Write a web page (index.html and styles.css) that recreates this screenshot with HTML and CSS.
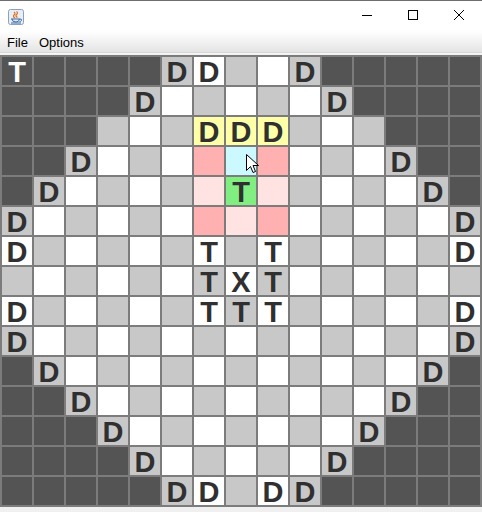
FILE: index.html
```html
<!DOCTYPE html>
<html>
<head>
<meta charset="utf-8">
<link rel="stylesheet" href="styles.css">
</head>
<body>
<div class="window">
  <div class="titlebar">
    <svg class="appicon" width="16" height="16" viewBox="0 0 16 16">
      <rect x="0.5" y="0.5" width="15" height="15" rx="2" fill="#e8eef6" stroke="#8aa0bc"/>
      <path d="M6 3 q2 1.5 0 3 q-1.5 1.5 1 3" fill="none" stroke="#e07020" stroke-width="1.2"/>
      <path d="M8.5 2.5 q2 1.5 0 3 q-1.5 1.5 1 3" fill="none" stroke="#e07020" stroke-width="1.2"/>
      <path d="M3 10 h9 q2 0 1.5 1.5 q-0.5 1 -2 1 M4 10 q0 3 4 3 q3 0 3.5 -3" fill="none" stroke="#3a6aa8" stroke-width="1"/>
      <path d="M3 14 h10" stroke="#3a6aa8" stroke-width="1"/>
    </svg>
    <div class="spacer"></div>
    <div class="ctrl">
      <svg width="10" height="10" viewBox="0 0 10 10"><path d="M0 5.5 H10" stroke="#000" stroke-width="1"/></svg>
    </div>
    <div class="ctrl">
      <svg width="10" height="10" viewBox="0 0 10 10"><rect x="0.5" y="0.5" width="9" height="9" fill="none" stroke="#000" stroke-width="1"/></svg>
    </div>
    <div class="ctrl">
      <svg width="10" height="10" viewBox="0 0 10 10"><path d="M0 0 L10 10 M10 0 L0 10" stroke="#000" stroke-width="1"/></svg>
    </div>
  </div>
  <div class="menubar">
    <span class="menu">File</span>
    <span class="menu">Options</span>
  </div>
  <div class="sep"></div>
  <div class="board">
    <!-- row 0 -->
    <div class="cell k wt">T</div><div class="cell k"></div><div class="cell k"></div><div class="cell k"></div><div class="cell k"></div>
    <div class="cell g">D</div><div class="cell w">D</div><div class="cell g"></div><div class="cell w"></div><div class="cell g">D</div>
    <div class="cell k"></div><div class="cell k"></div><div class="cell k"></div><div class="cell k"></div><div class="cell k"></div>
    <!-- row 1 -->
    <div class="cell k"></div><div class="cell k"></div><div class="cell k"></div><div class="cell k"></div>
    <div class="cell g">D</div><div class="cell w"></div><div class="cell g"></div><div class="cell w"></div><div class="cell g"></div><div class="cell w"></div><div class="cell g">D</div>
    <div class="cell k"></div><div class="cell k"></div><div class="cell k"></div><div class="cell k"></div>
    <!-- row 2 -->
    <div class="cell k"></div><div class="cell k"></div><div class="cell k"></div>
    <div class="cell g"></div><div class="cell w"></div><div class="cell g"></div><div class="cell y">D</div><div class="cell y">D</div><div class="cell y">D</div><div class="cell g"></div><div class="cell w"></div><div class="cell g"></div>
    <div class="cell k"></div><div class="cell k"></div><div class="cell k"></div>
    <!-- row 3 -->
    <div class="cell k"></div><div class="cell k"></div>
    <div class="cell g">D</div><div class="cell w"></div><div class="cell g"></div><div class="cell w"></div><div class="cell p"></div><div class="cell c"></div><div class="cell p"></div><div class="cell w"></div><div class="cell g"></div><div class="cell w"></div><div class="cell g">D</div>
    <div class="cell k"></div><div class="cell k"></div>
    <!-- row 4 -->
    <div class="cell k"></div>
    <div class="cell g">D</div><div class="cell w"></div><div class="cell g"></div><div class="cell w"></div><div class="cell g"></div><div class="cell l"></div><div class="cell n">T</div><div class="cell l"></div><div class="cell g"></div><div class="cell w"></div><div class="cell g"></div><div class="cell w"></div><div class="cell g">D</div>
    <div class="cell k"></div>
    <!-- row 5 -->
    <div class="cell g">D</div><div class="cell w"></div><div class="cell g"></div><div class="cell w"></div><div class="cell g"></div><div class="cell w"></div><div class="cell p"></div><div class="cell l"></div><div class="cell p"></div><div class="cell w"></div><div class="cell g"></div><div class="cell w"></div><div class="cell g"></div><div class="cell w"></div><div class="cell g">D</div>
    <!-- row 6 -->
    <div class="cell w">D</div><div class="cell g"></div><div class="cell w"></div><div class="cell g"></div><div class="cell w"></div><div class="cell g"></div><div class="cell w">T</div><div class="cell g"></div><div class="cell w">T</div><div class="cell g"></div><div class="cell w"></div><div class="cell g"></div><div class="cell w"></div><div class="cell g"></div><div class="cell w">D</div>
    <!-- row 7 -->
    <div class="cell g"></div><div class="cell w"></div><div class="cell g"></div><div class="cell w"></div><div class="cell g"></div><div class="cell w"></div><div class="cell g">T</div><div class="cell w">X</div><div class="cell g">T</div><div class="cell w"></div><div class="cell g"></div><div class="cell w"></div><div class="cell g"></div><div class="cell w"></div><div class="cell g"></div>
    <!-- row 8 -->
    <div class="cell w">D</div><div class="cell g"></div><div class="cell w"></div><div class="cell g"></div><div class="cell w"></div><div class="cell g"></div><div class="cell w">T</div><div class="cell g">T</div><div class="cell w">T</div><div class="cell g"></div><div class="cell w"></div><div class="cell g"></div><div class="cell w"></div><div class="cell g"></div><div class="cell w">D</div>
    <!-- row 9 -->
    <div class="cell g">D</div><div class="cell w"></div><div class="cell g"></div><div class="cell w"></div><div class="cell g"></div><div class="cell w"></div><div class="cell g"></div><div class="cell w"></div><div class="cell g"></div><div class="cell w"></div><div class="cell g"></div><div class="cell w"></div><div class="cell g"></div><div class="cell w"></div><div class="cell g">D</div>
    <!-- row 10 -->
    <div class="cell k"></div>
    <div class="cell g">D</div><div class="cell w"></div><div class="cell g"></div><div class="cell w"></div><div class="cell g"></div><div class="cell w"></div><div class="cell g"></div><div class="cell w"></div><div class="cell g"></div><div class="cell w"></div><div class="cell g"></div><div class="cell w"></div><div class="cell g">D</div>
    <div class="cell k"></div>
    <!-- row 11 -->
    <div class="cell k"></div><div class="cell k"></div>
    <div class="cell g">D</div><div class="cell w"></div><div class="cell g"></div><div class="cell w"></div><div class="cell g"></div><div class="cell w"></div><div class="cell g"></div><div class="cell w"></div><div class="cell g"></div><div class="cell w"></div><div class="cell g">D</div>
    <div class="cell k"></div><div class="cell k"></div>
    <!-- row 12 -->
    <div class="cell k"></div><div class="cell k"></div><div class="cell k"></div>
    <div class="cell g">D</div><div class="cell w"></div><div class="cell g"></div><div class="cell w"></div><div class="cell g"></div><div class="cell w"></div><div class="cell g"></div><div class="cell w"></div><div class="cell g">D</div>
    <div class="cell k"></div><div class="cell k"></div><div class="cell k"></div>
    <!-- row 13 -->
    <div class="cell k"></div><div class="cell k"></div><div class="cell k"></div><div class="cell k"></div>
    <div class="cell g">D</div><div class="cell w"></div><div class="cell g"></div><div class="cell w"></div><div class="cell g"></div><div class="cell w"></div><div class="cell g">D</div>
    <div class="cell k"></div><div class="cell k"></div><div class="cell k"></div><div class="cell k"></div>
    <!-- row 14 -->
    <div class="cell k"></div><div class="cell k"></div><div class="cell k"></div><div class="cell k"></div><div class="cell k"></div>
    <div class="cell g">D</div><div class="cell w">D</div><div class="cell g"></div><div class="cell w">D</div><div class="cell g">D</div>
    <div class="cell k"></div><div class="cell k"></div><div class="cell k"></div><div class="cell k"></div><div class="cell k"></div>
    <svg class="cursor" width="13" height="20" viewBox="0 0 13 20">
      <path d="M0.5 0.5 V16.5 L4.5 12.5 L7 18.5 L9.5 17.5 L7 11.5 H12.5 Z" fill="#fff" stroke="#000" stroke-width="1"/>
    </svg>
  </div>
</div>
</body>
</html>
```
FILE: styles.css
```css
html, body {
  margin: 0;
  padding: 0;
  background: #f0f0f0;
}
.window {
  width: 482px;
  height: 512px;
  overflow: hidden;
  background: #f0f0f0;
}
.titlebar {
  height: 30px;
  background: #ffffff;
  border-top: 1px solid #6e6e6e;
  display: flex;
  align-items: stretch;
  box-sizing: content-box;
}
.appicon {
  margin: 8px 0 0 8px;
  flex: none;
}
.spacer {
  flex: 1;
}
.ctrl {
  width: 46px;
  display: flex;
  align-items: flex-start;
  justify-content: center;
  padding-top: 9px;
  box-sizing: border-box;
}
.menubar {
  height: 21px;
  background: linear-gradient(#ffffff, #e4e4e4);
  display: flex;
  align-items: center;
  padding-left: 7px;
  gap: 11px;
  font-family: "Liberation Sans", Arial, sans-serif;
  font-size: 13px;
  color: #000;
}
.menu {
  line-height: 21px;
  padding-top: 1px;
}
.sep {
  height: 1px;
  border-top: 1px solid #d6d6d6;
  background: #f8f8f8;
  margin-bottom: 1px;
}
.board {
  position: relative;
  display: grid;
  grid-template-columns: repeat(15, 30px);
  grid-template-rows: repeat(15, 28px);
  gap: 2px;
  padding: 2px;
  background: #7c7c7c;
  width: max-content;
}
.cell {
  display: flex;
  align-items: center;
  justify-content: center;
  font-family: "Liberation Sans", Arial, sans-serif;
  font-weight: bold;
  font-size: 29px;
  line-height: 28px;
  color: #303030;
  padding-top: 1px;
  box-sizing: border-box;
}
.k { background: #545454; }
.g { background: #c8c8c8; }
.w { background: #ffffff; }
.y { background: #ffffa8; }
.p { background: #ffb0b0; }
.l { background: #ffe2e2; }
.c { background: #ccf8ff; }
.n { background: #80ee80; }
.wt { color: #ffffff; }
.cursor {
  position: absolute;
  left: 246px;
  top: 99px;
}
```
